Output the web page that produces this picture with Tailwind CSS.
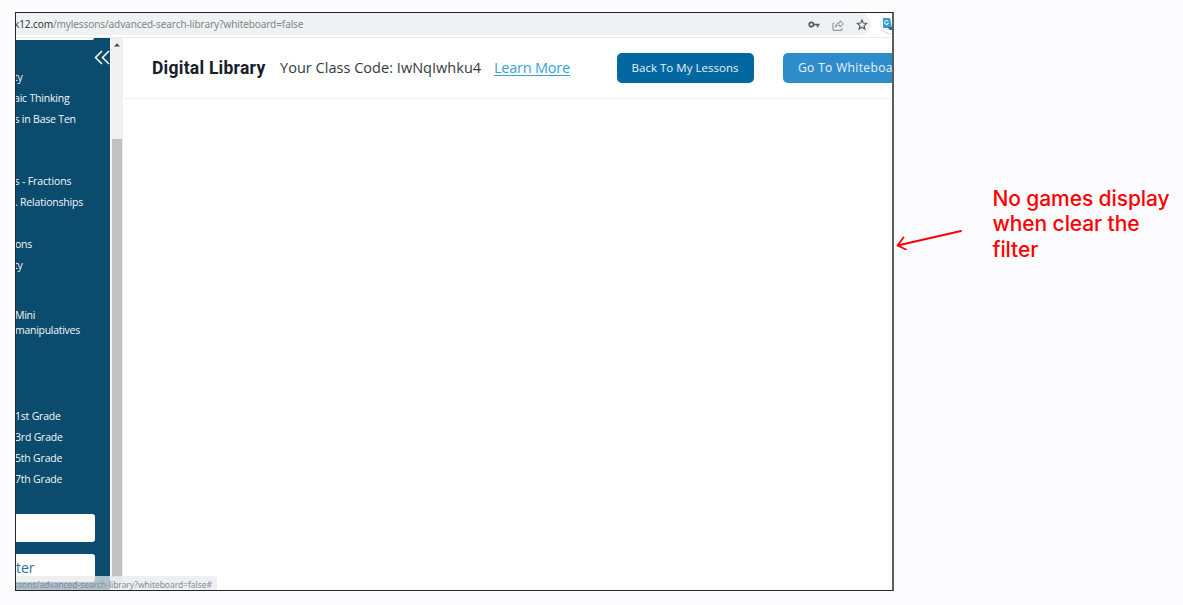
<!DOCTYPE html>
<html lang="en">
<head>
<meta charset="utf-8">
<title>Digital Library</title>
<script src="https://cdn.jsdelivr.net/npm/@tailwindcss/browser@4"></script>
</head>
<body class="flex h-[605px] w-[1183px] overflow-hidden bg-[#fcfcff] pt-3 pl-[15px] font-['Open_Sans',sans-serif] whitespace-nowrap">
<main class="relative flex h-[579px] w-[879px] shrink-0 flex-col overflow-hidden border border-r-2 border-[#242528] border-r-[#5c5d60] bg-white">
  <div class="flex h-[25px] shrink-0 border-b border-[#ececee]">
    <div class="flex h-[22px] w-[858px] items-center rounded-r-full bg-[#eff2f3] text-[10px] text-[#80858a]">
      <div class="-ml-[2px] grow pt-px font-['Noto_Sans',sans-serif] tracking-[-0.1px]"><span class="text-[#34383c]">k12.com</span>/mylessons/advanced-search-library?whiteboard=false</div>
      <div class="flex items-center gap-3 pt-px pr-[3px] text-[#54585c]">
        <svg class="h-3 w-3" viewBox="0 0 12 12" fill="none" stroke="currentColor" stroke-width="1.7"><circle cx="3.4" cy="5.5" r="2.2"/><path d="M5.6 5.5H11.5M9.6 5.5v2.7"/></svg>
        <svg class="h-3 w-3 text-[#85898c]" viewBox="0 0 12 12" fill="none" stroke="currentColor" stroke-width="1"><path d="M2.2 4.3H1v7h9V9.1M3.4 8.2C3.7 5.2 5.3 3.8 8 3.7V1.6l3.4 3.3L8 8V6.1C5.9 6.1 4.5 6.7 3.4 8.2z"/></svg>
        <svg class="h-3 w-3" viewBox="0 0 12 12" fill="none" stroke="currentColor" stroke-width="1.1"><path d="M6 .9 7.3 4.1 10.7 4.4 8.1 6.6 8.9 10 6 8.2 3.1 10 3.9 6.6 1.3 4.4 4.7 4.1z"/></svg>
      </div>
    </div>
    <svg class="ml-[7px] h-[24px] w-[14px] shrink-0" viewBox="0 0 14 24"><circle cx="12" cy="11.5" r="10" fill="#e4e5e7"/><circle cx="12.4" cy="10.5" r="9.6" fill="#fff"/><path d="M5 5h7l2 10H5z" fill="#3d9bd0"/><path d="M9.5 14h5v3h-3z" fill="#2c6f9c"/><path d="M10.3 8.4A2 2 0 1 0 10.5 10.4H8.8" fill="none" stroke="#fff" stroke-width="1"/></svg>
  </div>
  <div class="flex min-h-0 grow">
    <aside class="relative w-[94px] shrink-0 overflow-hidden bg-[#0b4b6d] text-[10.5px] text-[#f4f8fa]">
      <div class="h-[2px] w-[78px] rounded-br bg-white"></div>
      <svg class="absolute top-[12px] left-[78px] h-4 w-4" viewBox="0 0 16 16" fill="none" stroke="#fff" stroke-width="1.5"><path d="M8 1 1.5 7.5 8 14M15 1 8.5 7.5 15 14"/></svg>
      <ul class="mt-[27px] leading-[20.85px] tracking-[-0.2px]">
        <li class="-ml-[2px]">ty</li>
        <li class="-ml-[2px]">aic Thinking</li>
        <li class="-ml-[1.5px]">s in Base Ten</li>
        <li class="mt-[41.7px] -ml-[1.5px] tracking-[-0.13px]">s - Fractions</li>
        <li class="-ml-[1px]">. Relationships</li>
        <li class="mt-[20.85px] -ml-px">ons</li>
        <li class="-ml-[2px]">ty</li>
      </ul>
      <p class="mt-[33px] -ml-[1px] leading-[15px] tracking-[-0.28px]">Mini<br>manipulatives</p>
      <ul class="mt-[67.7px] -ml-[1px] leading-[20.85px] tracking-[-0.2px]">
        <li>1st Grade</li>
        <li>3rd Grade</li>
        <li>5th Grade</li>
        <li>7th Grade</li>
      </ul>
      <div class="mt-[24px] h-[28px] w-[79px] rounded-r-[3px] bg-white"></div>
      <div class="mt-3 h-[28px] w-[79px] rounded-r-[3px] bg-white text-[14px] leading-[27px] text-[#2a7199]">ter</div>
    </aside>
    <div class="ml-px flex w-[12px] shrink-0 flex-col items-center bg-[#eff0f2]">
      <svg class="mt-[5px] h-[4px] w-[6px]" viewBox="0 0 6 4"><path d="M0 3.5 3 .3 6 3.5z" fill="#454749"/></svg>
      <div class="mt-[92px] mr-px h-[438px] w-[10px] bg-[#c1c1c1]"></div>
    </div>
    <section class="min-w-0 grow">
      <header class="flex h-[61px] items-center border-b border-[#f0f1f3] pl-[29px]">
        <h1 class="w-[128px] shrink-0 font-['Roboto',sans-serif] text-[17.5px] font-bold tracking-[0.25px] text-[#15202b]">Digital Library</h1>
        <p class="w-[214px] shrink-0 text-[14.5px] tracking-[0.03px] text-[#33393e]">Your Class Code: IwNqIwhku4</p>
        <a class="w-[122.5px] shrink-0 text-[14.5px] tracking-[-0.22px] text-[#35a3d8] underline decoration-1 underline-offset-2">Learn More</a>
        <button class="h-[30px] w-[137px] shrink-0 rounded-[5px] bg-[#0368a1] text-[11.5px] tracking-[0.02px] text-[#e6f2f8]">Back To My Lessons</button>
        <button class="ml-[29.5px] h-[30px] w-[137px] shrink-0 rounded-[5px] bg-[#2e8ccb] pl-[15px] text-left text-[12px] tracking-[0.36px] text-[#eaf5fc]">Go To Whiteboard</button>
      </header>
    </section>
  </div>
  <div class="absolute bottom-0 left-0 h-[14px] w-[201px] overflow-hidden rounded-tr-[3px] bg-[#e7eaed]/75 font-['Noto_Sans',sans-serif] text-[8.5px] leading-[17px] tracking-[-0.05px] text-[#858b90]"><span class="-ml-[2px]">ssons/advanced-search-library?whiteboard=false#</span></div>
</main>
<svg class="mt-[214px] ml-px h-[24px] w-[68px] shrink-0" viewBox="0 0 68 24" fill="none" stroke="#f00" stroke-width="1.8" stroke-linecap="round" stroke-linejoin="round"><path d="M66 5 2.5 19.5M8.5 11.5l-6 8 8.5 4"/></svg>
<p class="mt-[173.5px] ml-[29.5px] font-['Inter',sans-serif] text-[21px] leading-[25.9px] font-medium tracking-[-0.1px] text-[#f00] [font-optical-sizing:none]">No games display<br>when clear the<br>filter</p>
</body>
</html>
